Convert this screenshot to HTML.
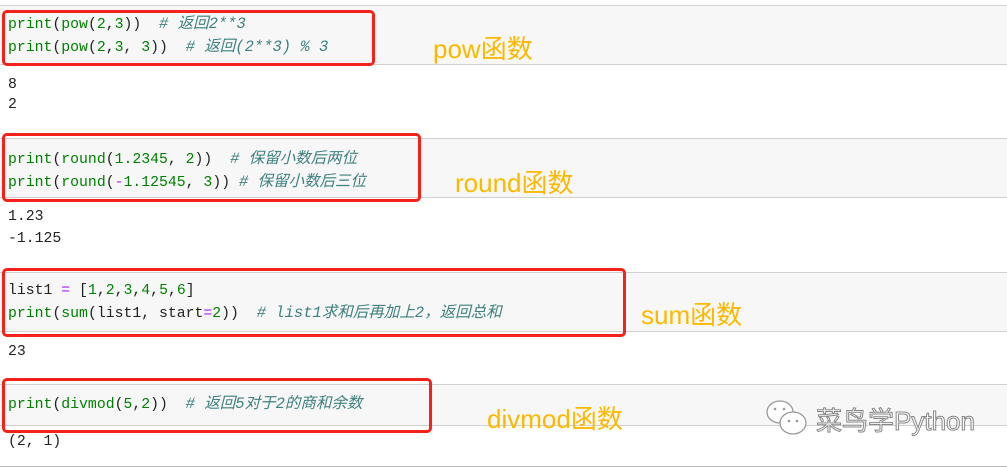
<!DOCTYPE html>
<html><head><meta charset="utf-8"><style>
body{margin:0;width:1007px;height:468px;background:#fff;position:relative;overflow:hidden;font-family:"Liberation Mono","Noto Sans CJK SC",monospace;font-size:14.8px;color:#222}
.cell{position:absolute;left:0;right:0;background:#f7f7f7;border-top:1px solid #cfcfcf;border-bottom:1px solid #cfcfcf}
.red{position:absolute;border:3px solid #f5221b;border-radius:5px;box-sizing:border-box}
.t{position:absolute;left:8px;white-space:pre;line-height:22px}
.g{color:#008000}.n{color:#008000}.c{color:#408080;font-style:italic;font-size:15.5px}.p{color:#aa22ff}
.lab{position:absolute;font-family:"Liberation Sans","Noto Sans CJK SC",sans-serif;font-size:26px;color:#fcb900;white-space:nowrap}
</style></head><body>
<div class="cell" style="top:5px;height:58px"></div>
<div class="red" style="left:2px;top:10px;width:373px;height:56px"></div>
<div class="t" style="top:13px"><span class="g">print</span>(<span class="g">pow</span>(<span class="n">2</span>,<span class="n">3</span>))  <span class="c"># 返回2**3</span>
<span class="g">print</span>(<span class="g">pow</span>(<span class="n">2</span>,<span class="n">3</span>, <span class="n">3</span>))  <span class="c"># 返回(2**3) % 3</span></div>
<div class="t" style="top:75px;line-height:20px">8
2</div>
<div class="lab" style="left:433px;top:29px">pow函数</div>

<div class="cell" style="top:138px;height:58px"></div>
<div class="red" style="left:2px;top:133px;width:419px;height:69px"></div>
<div class="t" style="top:148px"><span class="g">print</span>(<span class="g">round</span>(<span class="n">1.2345</span>, <span class="n">2</span>))  <span class="c"># 保留小数后两位</span>
<span class="g">print</span>(<span class="g">round</span>(<span class="p">-</span><span class="n">1.12545</span>, <span class="n">3</span>)) <span class="c"># 保留小数后三位</span></div>
<div class="t" style="top:206px">1.23
-1.125</div>
<div class="lab" style="left:455px;top:163px">round函数</div>

<div class="cell" style="top:272px;height:58px"></div>
<div class="red" style="left:2px;top:268px;width:624px;height:69px"></div>
<div class="t" style="top:280px">list1 <span class="p">=</span> [<span class="n">1</span>,<span class="n">2</span>,<span class="n">3</span>,<span class="n">4</span>,<span class="n">5</span>,<span class="n">6</span>]
<span class="g">print</span>(<span class="g">sum</span>(list1, start<span class="p">=</span><span class="n">2</span>))  <span class="c"># list1求和后再加上2，返回总和</span></div>
<div class="t" style="top:341px">23</div>
<div class="lab" style="left:641px;top:295px">sum函数</div>

<div class="cell" style="top:384px;height:40px"></div>
<div class="red" style="left:2px;top:378px;width:430px;height:55px"></div>
<div class="t" style="top:393px"><span class="g">print</span>(<span class="g">divmod</span>(<span class="n">5</span>,<span class="n">2</span>))  <span class="c"># 返回5对于2的商和余数</span></div>
<div class="t" style="top:431px">(2, 1)</div>
<div class="lab" style="left:487px;top:399px">divmod函数</div>
<div style="position:absolute;left:0;right:0;top:466px;border-top:1px solid #bbb"></div>

<svg style="position:absolute;left:765px;top:398px" width="48" height="42" viewBox="0 0 48 42">
<ellipse cx="15" cy="14" rx="13" ry="11" fill="#fff" stroke="#999" stroke-width="1.3"/>
<ellipse cx="28" cy="25" rx="13" ry="11" fill="#fff" stroke="#999" stroke-width="1.3"/>
<circle cx="10" cy="11" r="1.3" fill="#999"/><circle cx="19" cy="11" r="1.3" fill="#999"/>
<circle cx="24" cy="23" r="1.3" fill="#999"/><circle cx="32" cy="23" r="1.3" fill="#999"/>
</svg>
<div style="position:absolute;left:816px;top:401px;font-family:'Liberation Sans','Noto Sans CJK SC',sans-serif;font-size:26px;color:#fff;-webkit-text-stroke:1px #888;white-space:nowrap">菜鸟学Python</div>
</body></html>
